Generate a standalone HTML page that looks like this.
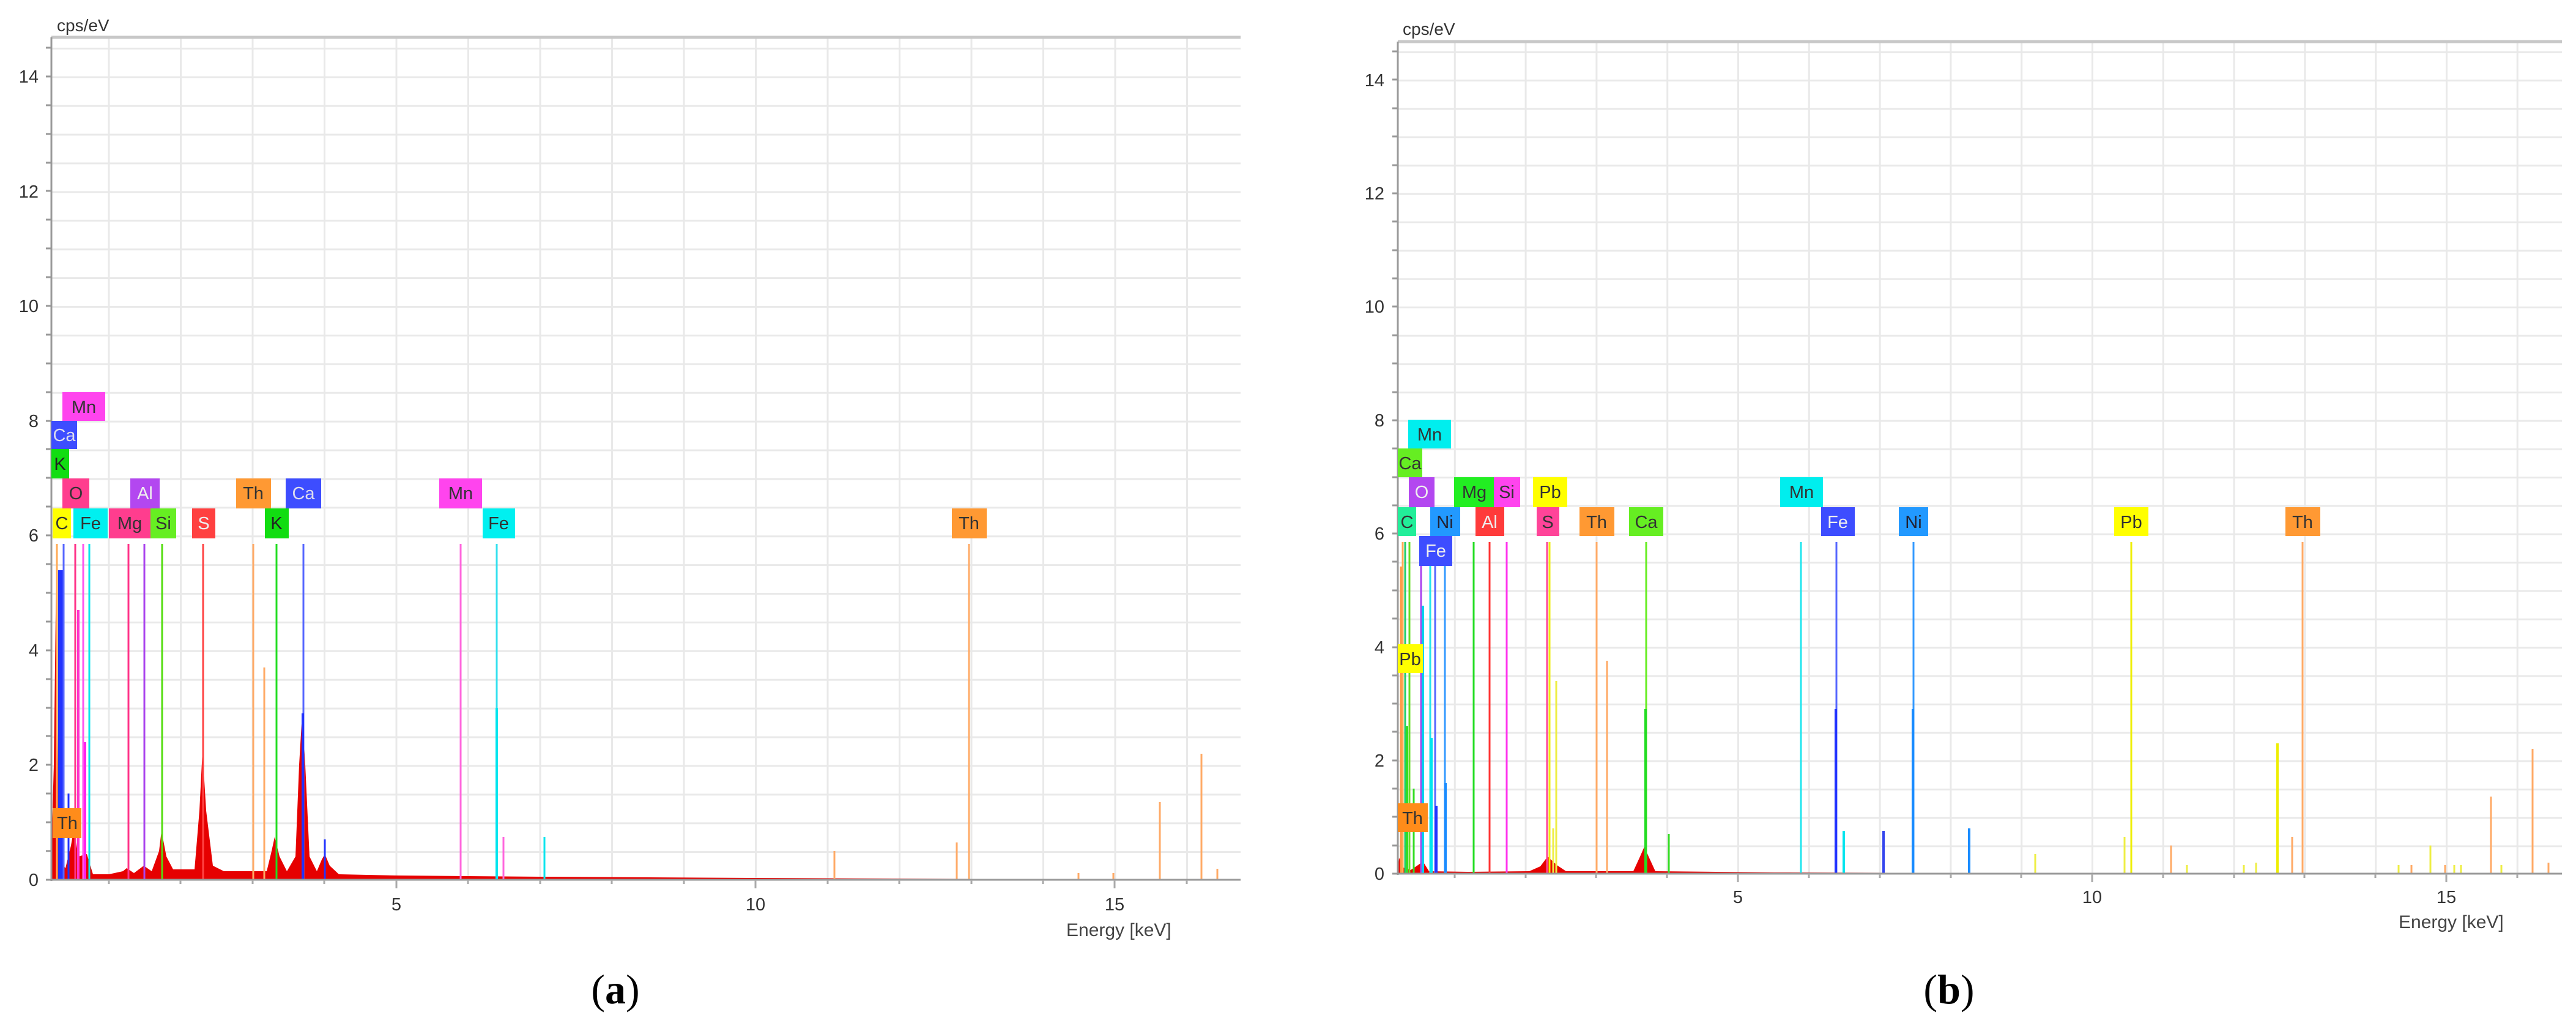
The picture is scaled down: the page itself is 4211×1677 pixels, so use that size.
<!DOCTYPE html>
<html><head><meta charset="utf-8">
<style>
html,body{margin:0;padding:0;background:#fff;}
svg{display:block;}
.t{font-family:"Liberation Sans",sans-serif;}
.lb{font-family:"Liberation Sans",sans-serif;font-size:29px;text-anchor:middle;}
.yl{font-family:"Liberation Sans",sans-serif;font-size:29px;fill:#333;text-anchor:end;}
.xl{font-family:"Liberation Sans",sans-serif;font-size:29px;fill:#333;text-anchor:middle;}
</style></head>
<body>
<svg width="4211" height="1677" viewBox="0 0 4211 1677" xmlns="http://www.w3.org/2000/svg">
<defs>
<pattern id="hL" patternUnits="userSpaceOnUse" width="10" height="46.9" y="1438"><rect y="0" width="10" height="3" fill="#e9e9e9"/></pattern>
<pattern id="vL" patternUnits="userSpaceOnUse" width="117.5" height="10" x="59"><rect x="0" width="3" height="10" fill="#e9e9e9"/></pattern>
<pattern id="hR" patternUnits="userSpaceOnUse" width="10" height="46.35" y="1428"><rect y="0" width="10" height="3" fill="#e9e9e9"/></pattern>
<pattern id="vR" patternUnits="userSpaceOnUse" width="115.8" height="10" x="2261"><rect x="0" width="3" height="10" fill="#e9e9e9"/></pattern>
</defs>

<!-- ============ LEFT CHART ============ -->
<rect x="84" y="61" width="1944" height="1377" fill="url(#hL)"/>
<rect x="84" y="61" width="1944" height="1377" fill="url(#vL)"/>
<line x1="84" y1="61" x2="2028" y2="61" stroke="#c8c8c8" stroke-width="5"/>
<text class="t" x="93" y="51" font-size="28" fill="#333">cps/eV</text>
<!-- y ticks -->
<g stroke="#999" stroke-width="3">
<line x1="75" y1="1438" x2="84" y2="1438"/><line x1="75" y1="1391" x2="84" y2="1391"/><line x1="75" y1="1344" x2="84" y2="1344"/><line x1="75" y1="1297" x2="84" y2="1297"/><line x1="75" y1="1250" x2="84" y2="1250"/><line x1="75" y1="1203" x2="84" y2="1203"/><line x1="75" y1="1157" x2="84" y2="1157"/><line x1="75" y1="1110" x2="84" y2="1110"/><line x1="75" y1="1063" x2="84" y2="1063"/><line x1="75" y1="1016" x2="84" y2="1016"/><line x1="75" y1="969" x2="84" y2="969"/><line x1="75" y1="922" x2="84" y2="922"/><line x1="75" y1="875" x2="84" y2="875"/><line x1="75" y1="828" x2="84" y2="828"/><line x1="75" y1="781" x2="84" y2="781"/><line x1="75" y1="734" x2="84" y2="734"/><line x1="75" y1="688" x2="84" y2="688"/><line x1="75" y1="641" x2="84" y2="641"/><line x1="75" y1="594" x2="84" y2="594"/><line x1="75" y1="547" x2="84" y2="547"/><line x1="75" y1="500" x2="84" y2="500"/><line x1="75" y1="453" x2="84" y2="453"/><line x1="75" y1="406" x2="84" y2="406"/><line x1="75" y1="359" x2="84" y2="359"/><line x1="75" y1="312" x2="84" y2="312"/><line x1="75" y1="266" x2="84" y2="266"/><line x1="75" y1="219" x2="84" y2="219"/><line x1="75" y1="172" x2="84" y2="172"/><line x1="75" y1="125" x2="84" y2="125"/><line x1="75" y1="78" x2="84" y2="78"/>
</g>
<text class="yl" x="63" y="1448">0</text><text class="yl" x="63" y="1260">2</text><text class="yl" x="63" y="1073">4</text><text class="yl" x="63" y="885">6</text><text class="yl" x="63" y="698">8</text><text class="yl" x="63" y="510">10</text><text class="yl" x="63" y="323">12</text><text class="yl" x="63" y="135">14</text>

<!-- spectrum -->
<polygon fill="#e60000" points="84,1438 84,1390 88,1250 92,922 95,1250 99,1410 107,1419 116,1382 121,1354 128,1400 142,1396 152,1429 178,1429 201,1424 207,1419 219,1427 235,1415 248,1424 260,1391 264,1358 272,1400 283,1421 318,1421 326,1325 331,1227 337,1325 348,1415 366,1424 436,1424 444,1391 449,1368 457,1400 469,1424 483,1400 489,1250 494,1166 499,1250 506,1400 518,1424 526,1405 531,1396 539,1415 554,1429 648,1431 883,1433 1235,1435 1705,1437 1705,1438"/>

<!-- lines -->
<g stroke-width="3">
<line x1="93" y1="889" x2="93" y2="1438" stroke="#ffaa55"/>
<line x1="99" y1="932" x2="99" y2="1438" stroke="#2233ff" stroke-width="8"/>
<line x1="104" y1="889" x2="104" y2="1438" stroke="#5566ff"/>
<line x1="112" y1="1297" x2="112" y2="1438" stroke="#2233ff"/>
<line x1="123" y1="889" x2="123" y2="1438" stroke="#ff3388"/>
<line x1="128" y1="997" x2="128" y2="1438" stroke="#ff33cc" stroke-width="4"/>
<line x1="136" y1="889" x2="136" y2="1438" stroke="#ff55ee"/>
<line x1="139" y1="1213" x2="139" y2="1438" stroke="#ff22ee" stroke-width="4"/>
<line x1="146" y1="889" x2="146" y2="1438" stroke="#00e5ee"/>
<line x1="210" y1="889" x2="210" y2="1438" stroke="#ff3388"/>
<line x1="236" y1="889" x2="236" y2="1438" stroke="#aa44ee"/>
<line x1="265" y1="889" x2="265" y2="1438" stroke="#55dd11"/>
<line x1="332" y1="889" x2="332" y2="1438" stroke="#ff4444"/>
<line x1="414" y1="889" x2="414" y2="1438" stroke="#ffaa66"/>
<line x1="432" y1="1091" x2="432" y2="1438" stroke="#ffaa66"/>
<line x1="452" y1="889" x2="452" y2="1438" stroke="#22dd22"/>
<line x1="496" y1="889" x2="496" y2="1438" stroke="#5566ff"/>
<line x1="495" y1="1166" x2="495" y2="1438" stroke="#2233ff" stroke-width="4"/>
<line x1="531" y1="1372" x2="531" y2="1438" stroke="#2233ff"/>
<line x1="753" y1="889" x2="753" y2="1438" stroke="#ff66dd"/>
<line x1="812" y1="889" x2="812" y2="1438" stroke="#33e0ee"/>
<line x1="812" y1="1157" x2="812" y2="1438" stroke="#00e5ee" stroke-width="4"/>
<line x1="823" y1="1368" x2="823" y2="1438" stroke="#ff66dd"/>
<line x1="890" y1="1368" x2="890" y2="1438" stroke="#00e5ee"/>
<line x1="1364" y1="1391" x2="1364" y2="1438" stroke="#ffaa66"/>
<line x1="1564" y1="1377" x2="1564" y2="1438" stroke="#ffaa66"/>
<line x1="1584" y1="889" x2="1584" y2="1438" stroke="#ffaa66"/>
<line x1="1763" y1="1427" x2="1763" y2="1438" stroke="#ffaa66"/>
<line x1="1820" y1="1427" x2="1820" y2="1438" stroke="#ffaa66"/>
<line x1="1896" y1="1311" x2="1896" y2="1438" stroke="#ffaa66"/>
<line x1="1964" y1="1232" x2="1964" y2="1438" stroke="#ffaa66"/>
<line x1="1990" y1="1420" x2="1990" y2="1438" stroke="#ffaa66"/>
</g>

<!-- axes -->
<line x1="84" y1="61" x2="84" y2="1440" stroke="#999" stroke-width="3"/>
<line x1="84" y1="1438" x2="2028" y2="1438" stroke="#999" stroke-width="3"/>
<g stroke="#aaa" stroke-width="3">
<line x1="178" y1="1438" x2="178" y2="1445"/><line x1="295" y1="1438" x2="295" y2="1445"/><line x1="413" y1="1438" x2="413" y2="1445"/><line x1="530" y1="1438" x2="530" y2="1445"/><line x1="648" y1="1438" x2="648" y2="1452"/><line x1="765" y1="1438" x2="765" y2="1445"/><line x1="883" y1="1438" x2="883" y2="1445"/><line x1="1000" y1="1438" x2="1000" y2="1445"/><line x1="1118" y1="1438" x2="1118" y2="1445"/><line x1="1235" y1="1438" x2="1235" y2="1452"/><line x1="1353" y1="1438" x2="1353" y2="1445"/><line x1="1470" y1="1438" x2="1470" y2="1445"/><line x1="1588" y1="1438" x2="1588" y2="1445"/><line x1="1705" y1="1438" x2="1705" y2="1445"/><line x1="1822" y1="1438" x2="1822" y2="1452"/><line x1="1940" y1="1438" x2="1940" y2="1445"/>
</g>
<text class="xl" x="648" y="1488">5</text><text class="xl" x="1235" y="1488">10</text><text class="xl" x="1822" y="1488">15</text>
<text class="t" x="1743" y="1530" font-size="30" fill="#444">Energy [keV]</text>

<!-- labels left -->
<g>
<rect x="102" y="641" width="70" height="47" fill="#ff44ee"/><text class="lb" x="137" y="675" fill="#333">Mn</text>
<rect x="84" y="688" width="42" height="46" fill="#3d4dff"/><text class="lb" x="105" y="721" fill="#dde">Ca</text>
<rect x="84" y="734" width="29" height="48" fill="#11dd11"/><text class="lb" x="98" y="768" fill="#222">K</text>
<rect x="102" y="782" width="44" height="49" fill="#ff3d8e"/><text class="lb" x="124" y="816" fill="#333">O</text>
<rect x="213" y="782" width="48" height="49" fill="#b347f0"/><text class="lb" x="237" y="816" fill="#eee">Al</text>
<rect x="386" y="782" width="57" height="49" fill="#ff9933"/><text class="lb" x="414" y="816" fill="#333">Th</text>
<rect x="467" y="782" width="58" height="49" fill="#3d4dff"/><text class="lb" x="496" y="816" fill="#dde">Ca</text>
<rect x="718" y="782" width="70" height="49" fill="#ff44ee"/><text class="lb" x="753" y="816" fill="#333">Mn</text>
<rect x="86" y="831" width="30" height="49" fill="#ffff00"/><text class="lb" x="101" y="865" fill="#333">C</text>
<rect x="120" y="831" width="56" height="49" fill="#00f0f0"/><text class="lb" x="148" y="865" fill="#333">Fe</text>
<rect x="178" y="831" width="68" height="49" fill="#ff3d8e"/><text class="lb" x="212" y="865" fill="#333">Mg</text>
<rect x="246" y="831" width="42" height="49" fill="#66ee22"/><text class="lb" x="267" y="865" fill="#333">Si</text>
<rect x="314" y="831" width="38" height="49" fill="#ff4040"/><text class="lb" x="333" y="865" fill="#eee">S</text>
<rect x="433" y="831" width="39" height="49" fill="#11dd11"/><text class="lb" x="452" y="865" fill="#222">K</text>
<rect x="789" y="831" width="53" height="49" fill="#00f0f0"/><text class="lb" x="815" y="865" fill="#333">Fe</text>
<rect x="1556" y="831" width="57" height="49" fill="#ff9933"/><text class="lb" x="1584" y="865" fill="#333">Th</text>
<rect x="86" y="1321" width="47" height="49" fill="#ff8c1a"/><text class="lb" x="110" y="1355" fill="#333">Th</text>
</g>

<!-- ============ RIGHT CHART ============ -->
<rect x="2285" y="68" width="1903" height="1360" fill="url(#hR)"/>
<rect x="2285" y="68" width="1903" height="1360" fill="url(#vR)"/>
<line x1="2285" y1="68" x2="4188" y2="68" stroke="#c8c8c8" stroke-width="5"/>
<text class="t" x="2293" y="57" font-size="28" fill="#333">cps/eV</text>
<g stroke="#999" stroke-width="3">
<line x1="2276" y1="1428" x2="2285" y2="1428"/><line x1="2276" y1="1382" x2="2285" y2="1382"/><line x1="2276" y1="1335" x2="2285" y2="1335"/><line x1="2276" y1="1289" x2="2285" y2="1289"/><line x1="2276" y1="1243" x2="2285" y2="1243"/><line x1="2276" y1="1196" x2="2285" y2="1196"/><line x1="2276" y1="1150" x2="2285" y2="1150"/><line x1="2276" y1="1104" x2="2285" y2="1104"/><line x1="2276" y1="1058" x2="2285" y2="1058"/><line x1="2276" y1="1011" x2="2285" y2="1011"/><line x1="2276" y1="965" x2="2285" y2="965"/><line x1="2276" y1="918" x2="2285" y2="918"/><line x1="2276" y1="872" x2="2285" y2="872"/><line x1="2276" y1="826" x2="2285" y2="826"/><line x1="2276" y1="780" x2="2285" y2="780"/><line x1="2276" y1="733" x2="2285" y2="733"/><line x1="2276" y1="687" x2="2285" y2="687"/><line x1="2276" y1="641" x2="2285" y2="641"/><line x1="2276" y1="594" x2="2285" y2="594"/><line x1="2276" y1="548" x2="2285" y2="548"/><line x1="2276" y1="501" x2="2285" y2="501"/><line x1="2276" y1="455" x2="2285" y2="455"/><line x1="2276" y1="409" x2="2285" y2="409"/><line x1="2276" y1="362" x2="2285" y2="362"/><line x1="2276" y1="316" x2="2285" y2="316"/><line x1="2276" y1="270" x2="2285" y2="270"/><line x1="2276" y1="223" x2="2285" y2="223"/><line x1="2276" y1="177" x2="2285" y2="177"/><line x1="2276" y1="130" x2="2285" y2="130"/><line x1="2276" y1="84" x2="2285" y2="84"/>
</g>
<text class="yl" x="2263" y="1438">0</text><text class="yl" x="2263" y="1253">2</text><text class="yl" x="2263" y="1068">4</text><text class="yl" x="2263" y="882">6</text><text class="yl" x="2263" y="697">8</text><text class="yl" x="2263" y="511">10</text><text class="yl" x="2263" y="326">12</text><text class="yl" x="2263" y="141">14</text>

<polygon fill="#e60000" points="2285,1428 2287,1402 2294,1418 2306,1422 2318,1414 2326,1408 2336,1424 2400,1425 2500,1424 2518,1416 2530,1400 2545,1414 2560,1424 2670,1424 2681,1400 2688,1384 2695,1400 2706,1424 2900,1426 3300,1427 3300,1428"/>

<g stroke-width="3">
<line x1="2291" y1="926" x2="2291" y2="1428" stroke="#ff9944" stroke-width="5"/>
<line x1="2293" y1="886" x2="2293" y2="1428" stroke="#ffaa55"/>
<line x1="2297" y1="886" x2="2297" y2="1428" stroke="#22cc66"/>
<line x1="2300" y1="1187" x2="2300" y2="1428" stroke="#33dd22" stroke-width="4"/>
<line x1="2304" y1="886" x2="2304" y2="1428" stroke="#66dd22"/>
<line x1="2311" y1="1289" x2="2311" y2="1428" stroke="#33dd22"/>
<line x1="2323" y1="886" x2="2323" y2="1428" stroke="#aa44ee"/>
<line x1="2326" y1="990" x2="2326" y2="1428" stroke="#00d0ee" stroke-width="4"/>
<line x1="2338" y1="886" x2="2338" y2="1428" stroke="#22e5ee"/>
<line x1="2340" y1="1206" x2="2340" y2="1428" stroke="#00e5ee" stroke-width="4"/>
<line x1="2346" y1="886" x2="2346" y2="1428" stroke="#5566ff"/>
<line x1="2348" y1="1317" x2="2348" y2="1428" stroke="#2233ff" stroke-width="4"/>
<line x1="2362" y1="886" x2="2362" y2="1428" stroke="#3399ff"/>
<line x1="2363" y1="1280" x2="2363" y2="1428" stroke="#1a8cff" stroke-width="4"/>
<line x1="2409" y1="886" x2="2409" y2="1428" stroke="#22dd22"/>
<line x1="2435" y1="886" x2="2435" y2="1428" stroke="#ff3333"/>
<line x1="2463" y1="886" x2="2463" y2="1428" stroke="#ff33ee"/>
<line x1="2529" y1="886" x2="2529" y2="1428" stroke="#ff4499"/>
<line x1="2533" y1="886" x2="2533" y2="1428" stroke="#eeee00"/>
<line x1="2544" y1="1113" x2="2544" y2="1428" stroke="#eeee44"/>
<line x1="2539" y1="1354" x2="2539" y2="1428" stroke="#eeee44"/>
<line x1="2610" y1="886" x2="2610" y2="1428" stroke="#ffaa66"/>
<line x1="2627" y1="1080" x2="2627" y2="1428" stroke="#ffaa66"/>
<line x1="2691" y1="886" x2="2691" y2="1428" stroke="#66ee22"/>
<line x1="2690" y1="1159" x2="2690" y2="1428" stroke="#22dd22" stroke-width="4"/>
<line x1="2728" y1="1363" x2="2728" y2="1428" stroke="#33dd22"/>
<line x1="2944" y1="886" x2="2944" y2="1428" stroke="#22e5ee"/>
<line x1="3002" y1="886" x2="3002" y2="1428" stroke="#5566ff"/>
<line x1="3001" y1="1159" x2="3001" y2="1428" stroke="#2233ff" stroke-width="4"/>
<line x1="3014" y1="1358" x2="3014" y2="1428" stroke="#00e5ee" stroke-width="4"/>
<line x1="3079" y1="1358" x2="3079" y2="1428" stroke="#3344ee" stroke-width="4"/>
<line x1="3128" y1="886" x2="3128" y2="1428" stroke="#3399ff"/>
<line x1="3127" y1="1159" x2="3127" y2="1428" stroke="#1a8cff" stroke-width="4"/>
<line x1="3219" y1="1354" x2="3219" y2="1428" stroke="#1a8cff" stroke-width="4"/>
<line x1="3327" y1="1396" x2="3327" y2="1428" stroke="#eeee44"/>
<line x1="3473" y1="1368" x2="3473" y2="1428" stroke="#eeee44"/>
<line x1="3484" y1="886" x2="3484" y2="1428" stroke="#eeee00"/>
<line x1="3549" y1="1382" x2="3549" y2="1428" stroke="#ffaa66"/>
<line x1="3575" y1="1414" x2="3575" y2="1428" stroke="#eeee44"/>
<line x1="3668" y1="1414" x2="3668" y2="1428" stroke="#eeee44"/>
<line x1="3688" y1="1410" x2="3688" y2="1428" stroke="#eeee44"/>
<line x1="3723" y1="1215" x2="3723" y2="1428" stroke="#eeee00" stroke-width="4"/>
<line x1="3747" y1="1368" x2="3747" y2="1428" stroke="#ffaa66"/>
<line x1="3764" y1="886" x2="3764" y2="1428" stroke="#ffaa66"/>
<line x1="3921" y1="1414" x2="3921" y2="1428" stroke="#eeee44"/>
<line x1="3942" y1="1414" x2="3942" y2="1428" stroke="#ffaa66"/>
<line x1="3973" y1="1382" x2="3973" y2="1428" stroke="#eeee44"/>
<line x1="3997" y1="1414" x2="3997" y2="1428" stroke="#ffaa66"/>
<line x1="4012" y1="1414" x2="4012" y2="1428" stroke="#eeee44"/>
<line x1="4023" y1="1414" x2="4023" y2="1428" stroke="#eeee44"/>
<line x1="4072" y1="1302" x2="4072" y2="1428" stroke="#ffaa66"/>
<line x1="4089" y1="1414" x2="4089" y2="1428" stroke="#eeee44"/>
<line x1="4140" y1="1224" x2="4140" y2="1428" stroke="#ffaa66"/>
<line x1="4166" y1="1410" x2="4166" y2="1428" stroke="#ffaa66"/>
</g>

<line x1="2285" y1="68" x2="2285" y2="1430" stroke="#999" stroke-width="3"/>
<line x1="2285" y1="1428" x2="4188" y2="1428" stroke="#999" stroke-width="3"/>
<g stroke="#aaa" stroke-width="3">
<line x1="2378" y1="1428" x2="2378" y2="1435"/><line x1="2494" y1="1428" x2="2494" y2="1435"/><line x1="2609" y1="1428" x2="2609" y2="1435"/><line x1="2725" y1="1428" x2="2725" y2="1435"/><line x1="2841" y1="1428" x2="2841" y2="1442"/><line x1="2957" y1="1428" x2="2957" y2="1435"/><line x1="3073" y1="1428" x2="3073" y2="1435"/><line x1="3189" y1="1428" x2="3189" y2="1435"/><line x1="3304" y1="1428" x2="3304" y2="1435"/><line x1="3420" y1="1428" x2="3420" y2="1442"/><line x1="3536" y1="1428" x2="3536" y2="1435"/><line x1="3652" y1="1428" x2="3652" y2="1435"/><line x1="3767" y1="1428" x2="3767" y2="1435"/><line x1="3883" y1="1428" x2="3883" y2="1435"/><line x1="3999" y1="1428" x2="3999" y2="1442"/><line x1="4115" y1="1428" x2="4115" y2="1435"/>
</g>
<text class="xl" x="2841" y="1476">5</text><text class="xl" x="3420" y="1476">10</text><text class="xl" x="3999" y="1476">15</text>
<text class="t" x="3921" y="1517" font-size="30" fill="#444">Energy [keV]</text>

<!-- labels right -->
<g>
<rect x="2302" y="686" width="70" height="47" fill="#00eeee"/><text class="lb" x="2337" y="720" fill="#333">Mn</text>
<rect x="2285" y="733" width="40" height="47" fill="#66ee22"/><text class="lb" x="2305" y="767" fill="#333">Ca</text>
<rect x="2303" y="780" width="42" height="49" fill="#b347f0"/><text class="lb" x="2324" y="814" fill="#eee">O</text>
<rect x="2377" y="780" width="65" height="49" fill="#22ee22"/><text class="lb" x="2410" y="814" fill="#333">Mg</text>
<rect x="2442" y="780" width="43" height="49" fill="#ff44ee"/><text class="lb" x="2463" y="814" fill="#333">Si</text>
<rect x="2506" y="780" width="56" height="49" fill="#ffff00"/><text class="lb" x="2534" y="814" fill="#333">Pb</text>
<rect x="2910" y="780" width="70" height="49" fill="#00eeee"/><text class="lb" x="2945" y="814" fill="#333">Mn</text>
<rect x="2285" y="829" width="30" height="47" fill="#22ee99"/><text class="lb" x="2300" y="863" fill="#333">C</text>
<rect x="2338" y="829" width="49" height="47" fill="#2299ff"/><text class="lb" x="2362" y="863" fill="#223">Ni</text>
<rect x="2412" y="829" width="47" height="47" fill="#ff3b3b"/><text class="lb" x="2435" y="863" fill="#eee">Al</text>
<rect x="2512" y="829" width="37" height="47" fill="#ff4499"/><text class="lb" x="2530" y="863" fill="#333">S</text>
<rect x="2582" y="829" width="57" height="47" fill="#ff9933"/><text class="lb" x="2610" y="863" fill="#333">Th</text>
<rect x="2663" y="829" width="56" height="47" fill="#66ee22"/><text class="lb" x="2691" y="863" fill="#333">Ca</text>
<rect x="2977" y="829" width="55" height="47" fill="#3d4dff"/><text class="lb" x="3004" y="863" fill="#eee">Fe</text>
<rect x="3104" y="829" width="48" height="47" fill="#2299ff"/><text class="lb" x="3128" y="863" fill="#223">Ni</text>
<rect x="3456" y="829" width="56" height="47" fill="#ffff00"/><text class="lb" x="3484" y="863" fill="#333">Pb</text>
<rect x="3736" y="829" width="57" height="47" fill="#ff9933"/><text class="lb" x="3764" y="863" fill="#333">Th</text>
<rect x="2320" y="876" width="54" height="49" fill="#3d4dff"/><text class="lb" x="2347" y="910" fill="#eee">Fe</text>
<rect x="2285" y="1053" width="41" height="47" fill="#ffff00"/><text class="lb" x="2305" y="1087" fill="#333">Pb</text>
<rect x="2285" y="1313" width="49" height="47" fill="#ff8c1a"/><text class="lb" x="2309" y="1347" fill="#333">Th</text>
</g>

<!-- captions -->
<text x="1006" y="1640" font-family="Liberation Serif, serif" font-size="68" text-anchor="middle" fill="#000">(<tspan font-weight="bold">a</tspan>)</text>
<text x="3186" y="1640" font-family="Liberation Serif, serif" font-size="68" text-anchor="middle" fill="#000">(<tspan font-weight="bold">b</tspan>)</text>
</svg>
</body></html>
